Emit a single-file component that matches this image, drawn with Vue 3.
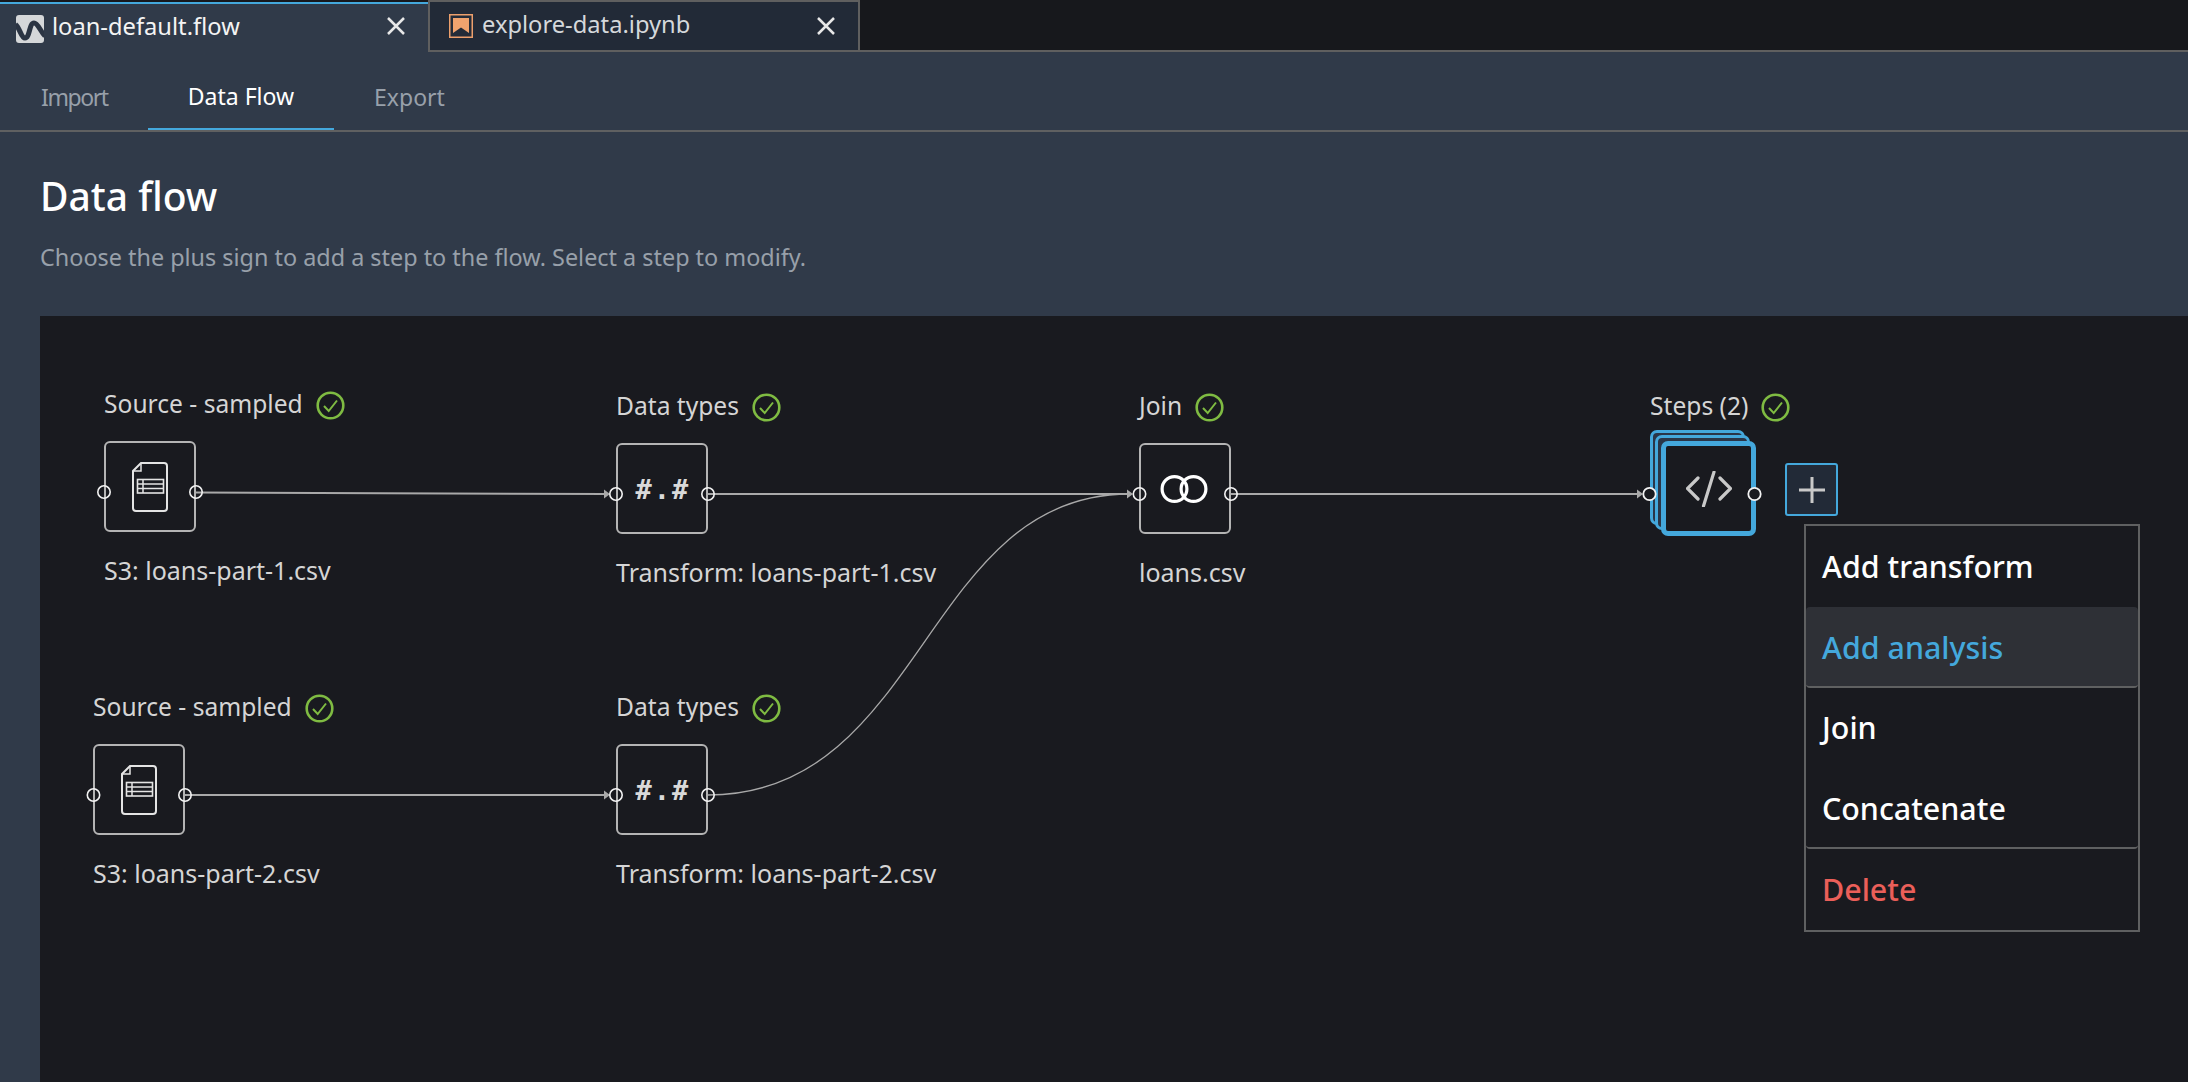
<script setup>
const ox = 40
const oy = 316
const nodes = [
  { id: 'a', x: 104, y: 389, title: 'Source - sampled', sub: 'S3: loans-part-1.csv', icon: 'file' },
  { id: 'b', x: 616, y: 391, title: 'Data types', sub: 'Transform: loans-part-1.csv', icon: 'num' },
  { id: 'c', x: 1139, y: 391, title: 'Join', sub: 'loans.csv', icon: 'join' },
  { id: 'd', x: 93, y: 692, title: 'Source - sampled', sub: 'S3: loans-part-2.csv', icon: 'file' },
  { id: 'e', x: 616, y: 692, title: 'Data types', sub: 'Transform: loans-part-2.csv', icon: 'num' },
]
const edges = [
  'M196 492.5 L606 494',
  'M708 494 L1129 494',
  'M1231 494 L1639 494',
  'M185 795 L606 795',
]
const curve = 'M708 795 C924 795 924 494 1129 494'
const arrows = [[604, 494], [1127, 494], [1637, 494], [604, 795]]
const inPorts = [[104, 492], [616, 494], [1139.5, 494], [93.5, 795], [616, 795]]
const outPorts = [[196, 492], [708, 494], [1231, 494], [185, 795], [708, 795]]
const solidPorts = [[1649.5, 494], [1754.5, 494]]
const pos = (n) => ({ left: n.x - ox + 'px', top: n.y - oy + 'px' })
const menu = [
  { label: 'Add transform' },
  { label: 'Add analysis', cls: 'active' },
  { label: 'Join' },
  { label: 'Concatenate', cls: 'divided' },
  { label: 'Delete', cls: 'danger' },
]
</script>

<template>
  <div class="page">
    <div class="tabbar">
      <div class="doc-tab current">
        <svg class="logo" viewBox="16 12 28 28" width="28" height="28">
          <rect x="16" y="12" width="28" height="28" rx="3" fill="#d5d7d9" />
          <path d="M15.5 21.5C20 25 21 35 25 35C30 35 29 20 34 20C38 20 40 28 45 33" fill="none" stroke="#2b3443" stroke-width="5" />
        </svg>
        <span class="doc-name">loan-default.flow</span>
        <svg class="close" viewBox="0 0 18 18" width="18" height="18"><path d="M1 1L17 17M17 1L1 17" stroke="#e8e8e8" stroke-width="2.5" /></svg>
      </div>
      <div class="doc-tab other">
        <svg class="bookmark" viewBox="0 0 24 24" width="24" height="24">
          <rect x="0.75" y="0.75" width="22.5" height="22.5" fill="#232b38" stroke="#ec9f6c" stroke-width="1.5" />
          <path d="M4 4H20V19L12 13.5L4 19Z" fill="#f0a36e" />
        </svg>
        <span class="doc-name dim">explore-data.ipynb</span>
        <svg class="close" viewBox="0 0 18 18" width="18" height="18"><path d="M1 1L17 17M17 1L1 17" stroke="#e8e8e8" stroke-width="2.5" /></svg>
      </div>
      <div class="tab-rest"></div>
    </div>

    <nav class="nav">
      <a class="nav-item narrow">Import</a>
      <a class="nav-item on">Data Flow</a>
      <a class="nav-item">Export</a>
    </nav>

    <header class="head">
      <h1>Data flow</h1>
      <p>Choose the plus sign to add a step to the flow. Select a step to modify.</p>
    </header>

    <section class="canvas">
      <div v-for="n in nodes" :key="n.id" class="node" :style="pos(n)">
        <div class="node-head">
          <span>{{ n.title }}</span>
          <svg class="ok" viewBox="0 0 29 29" width="29" height="29"><circle cx="14.5" cy="14.5" r="12.8" fill="none" stroke="#7fbb42" stroke-width="2.6" /><path d="M8 15L12.7 20L21 9.5" fill="none" stroke="#7fbb42" stroke-width="2" /></svg>
        </div>
        <div class="box">
          <svg v-if="n.icon === 'file'" viewBox="0 0 36 50" width="36" height="50" fill="none" stroke="#e4e4e4">
            <path d="M9 1H32A3 3 0 0 1 35 4V46A3 3 0 0 1 32 49H4A3 3 0 0 1 1 46V9Z" stroke-width="2" />
            <path d="M9 1V9H1" stroke-width="1.5" />
            <rect x="5.5" y="17.5" width="26" height="13.5" stroke-width="1.6" />
            <path d="M5.5 22H31.5M5.5 26.5H31.5M11 17.5V31" stroke-width="1.5" />
          </svg>
          <span v-else-if="n.icon === 'num'" class="num">#.#</span>
          <svg v-else class="rings" viewBox="0 0 48 30" width="48" height="30" fill="none" stroke="#fff" stroke-width="3.2">
            <circle cx="14.5" cy="15" r="12.4" /><circle cx="33.5" cy="15" r="12.4" />
          </svg>
        </div>
        <div class="node-sub">{{ n.sub }}</div>
      </div>

      <div class="node" :style="pos({ x: 1650, y: 391 })">
        <div class="node-head">
          <span>Steps (2)</span>
          <svg class="ok" viewBox="0 0 29 29" width="29" height="29"><circle cx="14.5" cy="14.5" r="12.8" fill="none" stroke="#7fbb42" stroke-width="2.6" /><path d="M8 15L12.7 20L21 9.5" fill="none" stroke="#7fbb42" stroke-width="2" /></svg>
        </div>
        <div class="stack">
          <div class="sheet s1"></div>
          <div class="sheet s2"></div>
          <div class="sheet s3">
            <svg viewBox="0 0 46 36" width="46" height="36" fill="none" stroke="#c9c9c9" stroke-width="3.2">
              <path d="M12 7L1.5 17.5L12 28M34 7L44.5 17.5L34 28M28 1L17.5 35" stroke-linecap="round" />
            </svg>
          </div>
        </div>
      </div>

      <button class="plus" type="button" aria-label="Add step">
        <svg viewBox="0 0 26 26" width="26" height="26"><path d="M13 0V26M0 13H26" stroke="#c9c9c9" stroke-width="3" /></svg>
      </button>

      <svg class="wires" viewBox="40 316 2148 766" width="2148" height="766">
        <path v-for="d in edges" :key="d" :d="d" fill="none" stroke="#a9a9a9" stroke-width="2" />
        <path :d="curve" fill="none" stroke="#a9a9a9" stroke-width="1.3" />
        <path v-for="a in arrows" :key="a.join()" :d="`M${a[0]} ${a[1] - 4.5}L${a[0] + 6} ${a[1]}L${a[0]} ${a[1] + 4.5}Z`" fill="#a9a9a9" />
        <circle v-for="p in inPorts" :key="'i' + p[0] + p[1]" :cx="p[0]" :cy="p[1]" r="6.2" fill="none" stroke="#f2f2f2" stroke-width="1.6" />
        <circle v-for="p in outPorts" :key="'o' + p[0] + p[1]" :cx="p[0]" :cy="p[1]" r="6.2" fill="none" stroke="#f2f2f2" stroke-width="1.6" />
        <circle v-for="p in solidPorts" :key="'s' + p[0]" :cx="p[0]" :cy="p[1]" r="6.2" fill="#191a1f" stroke="#f2f2f2" stroke-width="1.8" />
      </svg>

      <ul class="menu">
        <li v-for="m in menu" :key="m.label" class="menu-item" :class="m.cls">{{ m.label }}</li>
      </ul>
    </section>
  </div>
</template>

<style scoped>
.page {
  display: flex;
  flex-direction: column;
  height: 1082px;
  overflow: hidden;
  background: #303a49;
  font-family: "Noto Sans", "Open Sans", sans-serif;
}
.tabbar {
  display: flex;
  height: 52px;
  flex: none;
}
.doc-tab {
  position: relative;
  display: flex;
  align-items: center;
  box-sizing: border-box;
  height: 52px;
}
.doc-tab.current {
  width: 428px;
  padding: 4px 0 0 16px;
  border-top: 2px solid #17181c;
  background: #303a49;
}
.doc-tab.current::before {
  content: "";
  position: absolute;
  left: 0;
  right: 0;
  top: 0;
  height: 2px;
  background: #44a8dc;
}
.doc-tab.other {
  width: 432px;
  padding: 0 0 0 19px;
  border: 2px solid #5f5f5f;
  background: #222a37;
}
.tab-rest {
  flex: 1;
  background: #17181c;
  border-bottom: 2px solid #5f5f5f;
}
.logo { flex: none; }
.bookmark { flex: none; }
.doc-name {
  margin-left: 8px;
  margin-top: -6px;
  font-size: 23.7px;
  color: #f4f4f4;
}
.doc-name.dim {
  margin-left: 9px;
  margin-top: -5px;
  color: #d5d8db;
}
.close {
  position: absolute;
  top: 15px;
  right: 23px;
}
.nav {
  display: flex;
  flex: none;
  box-sizing: border-box;
  height: 80px;
  padding-left: 1px;
  border-bottom: 2px solid #5f6061;
}
.nav-item {
  display: flex;
  align-items: center;
  box-sizing: border-box;
  height: 78px;
  padding: 12px 40px 0;
  font-size: 23px;
  color: #98a0aa;
}
.nav-item.narrow {
  letter-spacing: -1.4px;
}
.nav-item.on {
  color: #fff;
  border-bottom: 2px solid #44a8dc;
}
.head {
  flex: none;
  padding: 42px 0 43px 40px;
}
.head h1 {
  margin: 0 0 24px;
  font-size: 39px;
  line-height: 44px;
  font-weight: 500;
  color: #fff;
}
.head p {
  margin: 0 0 1px;
  font-size: 23.4px;
  line-height: 30px;
  color: #98a0aa;
}
.canvas {
  position: relative;
  flex: 1;
  margin-left: 40px;
  background: #191a1f;
}
.node {
  position: absolute;
  display: flex;
  flex-direction: column;
  color: #d5d5d5;
  font-size: 24.6px;
  line-height: 30px;
  white-space: nowrap;
}
.node-head {
  display: flex;
  align-items: center;
  gap: 13px;
  height: 30px;
  margin-bottom: 22px;
}
.ok {
  margin-top: 2px;
}
.box {
  display: flex;
  align-items: center;
  justify-content: center;
  box-sizing: border-box;
  width: 92px;
  height: 91px;
  border: 2px solid #b4b4b4;
  border-radius: 6px;
}
.rings {
  margin-left: -2px;
}
.num {
  font-family: "DejaVu Sans Mono", "Liberation Mono", monospace;
  font-weight: 700;
  font-size: 27px;
  letter-spacing: 2px;
  color: #d9d9d9;
  padding: 3px 0 0 2px;
}
.node-sub {
  margin-top: 23px;
  font-size: 25px;
}
.stack {
  position: relative;
  width: 106px;
  height: 106px;
  margin-top: -13px;
}
.sheet {
  position: absolute;
  box-sizing: border-box;
  width: 95px;
  height: 95px;
  border: 3px solid #44a8dc;
  border-radius: 7px;
  background: #2a3648;
}
.s1 { left: 0; top: 0; }
.s2 { left: 5px; top: 5px; }
.s3 {
  left: 11px;
  top: 11px;
  display: flex;
  align-items: center;
  justify-content: center;
  border-width: 5px;
  background: #191a1f;
}
.plus {
  position: absolute;
  left: 1745px;
  top: 147px;
  display: flex;
  align-items: center;
  justify-content: center;
  box-sizing: border-box;
  width: 53px;
  height: 53px;
  padding: 0;
  border: 2px solid #44a8dc;
  border-radius: 3px;
  background: #222a37;
}
.wires {
  position: absolute;
  left: 0;
  top: 0;
  pointer-events: none;
}
.menu {
  position: absolute;
  left: 1764px;
  top: 208px;
  box-sizing: border-box;
  width: 336px;
  height: 408px;
  margin: 0;
  padding: 0;
  list-style: none;
  display: flex;
  flex-direction: column;
  border: 2px solid #5f6061;
  background: #191a1f;
}
.menu-item {
  flex: 1;
  display: flex;
  align-items: center;
  box-sizing: border-box;
  padding: 2px 0 0 16px;
  font-size: 30.4px;
  font-weight: 500;
  color: #fff;
  border-bottom: 2px solid transparent;
  border-radius: 4px;
}
.menu-item.active {
  background: #2e3036;
  color: #44a8dc;
  border-bottom-color: #5f6061;
}
.menu-item.divided {
  border-bottom-color: #5f6061;
}
.menu-item.danger {
  color: #eb5f59;
}
</style>

<style>
html, body { margin: 0; background: #303a49; overflow: hidden; }
</style>
